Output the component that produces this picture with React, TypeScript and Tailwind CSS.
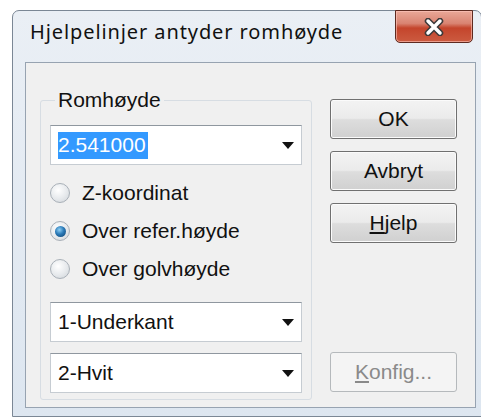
import React from 'react';

const dlgFont = "font-['Liberation_Sans',Arial,sans-serif]";

// Small black triangle used as the drop-down arrow of a combo box
function ComboArrow() {
  return (
    <svg width="12" height="7" viewBox="0 0 12 7" className="shrink-0">
      <polygon points="0,0 12,0 6,7" fill="#111" />
    </svg>
  );
}

function Combo({ value, selected }: { value: string; selected?: boolean }) {
  return (
    <div className="flex h-[40px] w-[252px] items-center justify-between border border-[#c6ccd2] border-t-[#8f979f] bg-white pl-[7px] pr-[7px]">
      {selected ? (
        <span className="flex h-[27px] items-center bg-[#3399ff] pr-[2px] text-white">{value}</span>
      ) : (
        <span className="text-[#111]">{value}</span>
      )}
      <ComboArrow />
    </div>
  );
}

function Radio({ label, checked }: { label: string; checked?: boolean }) {
  return (
    <div className="flex h-[38px] items-center gap-[12px]">
      <span className="flex h-[20px] w-[20px] items-center justify-center rounded-full border border-[#a9b0b8] bg-[radial-gradient(circle_at_40%_35%,#ffffff_0%,#e6e9ec_55%,#cdd2d7_100%)]">
        {checked && (
          <span className="h-[11px] w-[11px] rounded-full bg-[radial-gradient(circle_at_40%_35%,#8fd0f5_0%,#2a7ab8_45%,#0e3f6a_100%)]" />
        )}
      </span>
      <span className="text-[#111]">{label}</span>
    </div>
  );
}

function DlgButton({
  children,
  disabled,
  className = '',
}: {
  children: React.ReactNode;
  disabled?: boolean;
  className?: string;
}) {
  const look = disabled
    ? 'border-[#b5b9bc] bg-[#f4f4f4] text-[#8a8a8a]'
    : 'border-[#707070] bg-[linear-gradient(to_bottom,#f3f3f3_0%,#ebebeb_48%,#dddddd_52%,#d0d0d0_100%)] text-[#111] shadow-[inset_0_0_0_1px_#fbfbfb]';
  return (
    <div className={`flex h-[40px] w-[127px] items-center justify-center rounded-[3px] border ${look} ${className}`}>
      {children}
    </div>
  );
}

export default function App() {
  return (
    <div className="h-[418px] w-[481px] overflow-hidden bg-white pl-[12px] pt-[10px]">
      <div className="flex h-[407px] w-[470px] flex-col rounded-t-[7px] border border-[#7b8795] bg-gradient-to-b from-[#eaeff5] to-[#dde6f0] pb-[8px] pl-[12px] pr-[5px]">
        {/* title bar */}
        <div className="flex h-[51px] items-start justify-between">
          <span className="ml-[5px] mt-[8px] font-['Noto_Sans','Open_Sans',sans-serif] text-[20px] leading-[26px] tracking-[0.9px] text-[#111]">
            Hjelpelinjer antyder romhøyde
          </span>
          <div className="-mt-[1px] mr-[3px] flex h-[33px] w-[78px] items-center justify-center rounded-b-[5px] border border-[#5e2a20] bg-[linear-gradient(to_bottom,#e9a898_0%,#d98472_40%,#c4452c_55%,#cc5b40_100%)] shadow-[inset_0_0_0_1px_rgba(255,200,190,0.6)]">
            <svg width="20" height="18" viewBox="0 0 20 18">
              <path d="M4 3 L16 15 M16 3 L4 15" stroke="#3c3a3a" strokeWidth="6.5" strokeLinecap="round" />
              <path d="M4 3 L16 15 M16 3 L4 15" stroke="#ffffff" strokeWidth="3.5" strokeLinecap="round" />
            </svg>
          </div>
        </div>

        {/* client area */}
        <div className={`flex flex-1 border border-[#97a3b1] bg-[#f0f0f0] pl-[14px] pt-[25px] text-[21px] leading-[24px] ${dlgFont}`}>
          <fieldset className="h-[312px] w-[272px] rounded-[3px] border border-[#d7dde3] px-[9px] pb-[6px]">
            <legend className="ml-[5px] px-[3px] text-[#111]">Romhøyde</legend>
            <div className="mt-[13px]">
              <Combo value="2.541000" selected />
            </div>
            <div className="mt-[9px] flex flex-col">
              <Radio label="Z-koordinat" />
              <Radio label="Over refer.høyde" checked />
              <Radio label="Over golvhøyde" />
            </div>
            <div className="mt-[14px]">
              <Combo value="1-Underkant" />
            </div>
            <div className="mt-[11px]">
              <Combo value="2-Hvit" />
            </div>
          </fieldset>

          <div className="ml-[18px] mt-[11px] flex flex-col gap-[12px]">
            <DlgButton>OK</DlgButton>
            <DlgButton>Avbryt</DlgButton>
            <DlgButton>
              <span>
                <span className="underline underline-offset-2">H</span>jelp
              </span>
            </DlgButton>
            <DlgButton disabled className="mt-[97px]">
              <span>
                <span className="underline underline-offset-2">K</span>onfig...
              </span>
            </DlgButton>
          </div>
        </div>
      </div>
    </div>
  );
}
